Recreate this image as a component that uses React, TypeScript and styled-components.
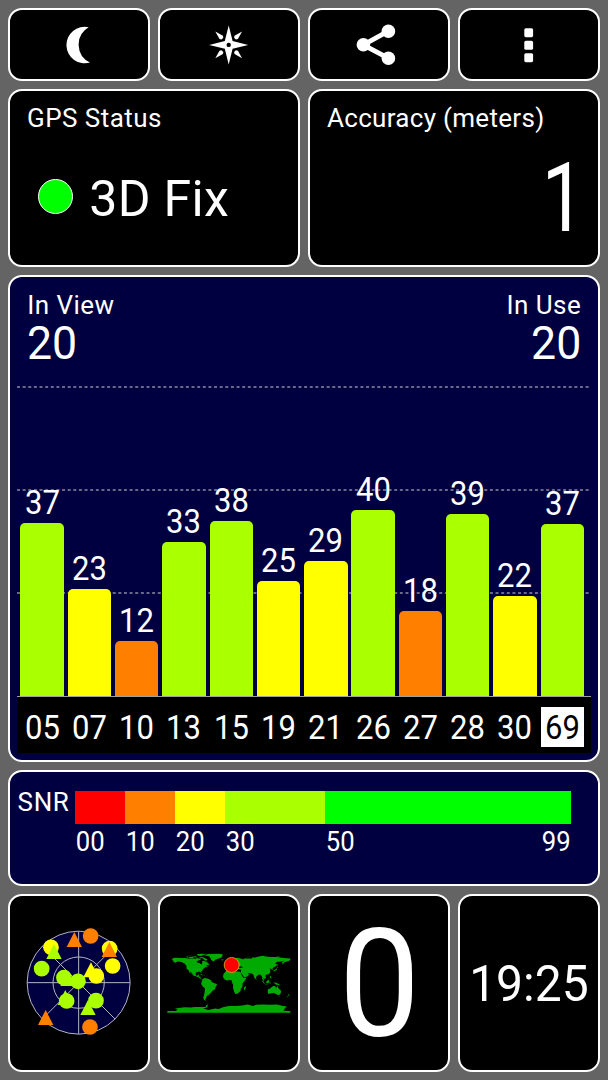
import React from "react";
import styled, { createGlobalStyle } from "styled-components";

const RED = "#ff0000";
const ORANGE = "#ff8000";
const YELLOW = "#ffff00";
const LIME = "#aaff00";
const GREEN = "#00ff00";
const NAVY = "#000040";

const GlobalStyle = createGlobalStyle`
  * { box-sizing: border-box; }
  body {
    margin: 0;
    background: #646464;
    color: #fff;
    font-family: Roboto, "Liberation Sans", sans-serif;
  }
`;

const Screen = styled.main`
  display: grid;
  grid-template-columns: repeat(4, 142px);
  grid-template-rows: 73px 178px 487px 116px 178px;
  gap: 8px;
  width: 608px;
  height: 1080px;
  padding: 8px;
`;

const Card = styled.section<{ $span?: number; $fill?: string }>`
  grid-column: span ${(p) => p.$span ?? 1};
  display: flex;
  flex-direction: column;
  min-width: 0;
  border: 2px solid #fff;
  border-radius: 14px;
  background: ${(p) => p.$fill ?? "#000"};
`;

const CenterCard = styled(Card)<{ $drop?: number }>`
  align-items: center;
  justify-content: center;
  padding-top: ${(p) => p.$drop ?? 0}px;
`;

const IconButton = styled.button`
  display: flex;
  align-items: center;
  justify-content: center;
  padding: 0;
  border: 2px solid #fff;
  border-radius: 14px;
  background: #000;
  color: #fff;
`;

const Icon = styled.svg`
  width: 48px;
  height: 48px;
  fill: currentColor;
`;

const Text = styled.span<{ $size: number; $line: number; $spacing?: number }>`
  display: block;
  font-size: ${(p) => p.$size}px;
  line-height: ${(p) => p.$line}px;
  letter-spacing: ${(p) => p.$spacing ?? 0}px;
  white-space: nowrap;
`;

const Narrow = styled(Text)<{ $scale: number; $origin?: string }>`
  transform: scaleX(${(p) => p.$scale});
  transform-origin: ${(p) => p.$origin ?? "center"};
`;

const StatusCard = styled(Card)`
  padding: 12px 16px 0 17px;
`;

const FixRow = styled.div`
  display: flex;
  align-items: flex-start;
  gap: 16px;
  margin-top: 37px;
  padding-left: 11.3px;
`;

const FixDot = styled.span`
  width: 35px;
  height: 35px;
  margin-top: 9px;
  border: 1px solid #fff;
  border-radius: 50%;
  background: ${GREEN};
`;

const AccuracyValue = styled(Narrow)`
  align-self: flex-end;
  margin: 9px -3px 0 0;
`;

const ChartCard = styled(Card)`
  padding: 0 7.3px;
`;

const ChartHeader = styled.header`
  display: flex;
  justify-content: space-between;
  height: 103px;
  padding: 13px 9.5px 0 10px;
`;

const Count = styled.div<{ $end?: boolean }>`
  display: flex;
  flex-direction: column;
  align-items: ${(p) => (p.$end ? "flex-end" : "flex-start")};
`;

const CountValue = styled(Narrow)`
  margin-top: -2px;
`;

const Plot = styled.div`
  display: grid;
  height: 317px;
  border-bottom: 1px solid #a0a0a0;
`;

const GridLines = styled.svg`
  grid-area: 1 / 1;
  width: 573.4px;
  height: 316px;
`;

const Columns = styled.div`
  grid-area: 1 / 1;
  display: grid;
  grid-template-columns: repeat(12, 1fr);
  gap: 3.9px;
  padding: 0 6.8px 0 3.2px;
`;

const Column = styled.div`
  display: flex;
  flex-direction: column;
  align-items: center;
  justify-content: flex-end;
`;

const Bar = styled.div<{ $color: string }>`
  width: 100%;
  margin-top: 1px;
  border-radius: 5px 5px 0 0;
  background: ${(p) => p.$color};
`;

const IdBand = styled.div`
  display: grid;
  grid-template-columns: repeat(12, 1fr);
  align-items: start;
  gap: 3.9px;
  height: 56px;
  padding: 10px 6.8px 0 3.2px;
  background: #000;
`;

const SatId = styled.div<{ $active?: boolean }>`
  display: flex;
  justify-content: center;
  height: 40px;
  color: ${(p) => (p.$active ? "#000" : "#fff")};
  background: ${(p) => (p.$active ? "#fff" : "transparent")};
`;

const SnrCard = styled(Card)`
  flex-direction: row;
  align-items: flex-start;
  padding-left: 7.6px;
`;

const SnrLabel = styled(Text)`
  width: 57.1px;
  margin-top: 14.5px;
`;

const Scale = styled.div`
  display: flex;
  margin-top: 19px;
`;

const Segment = styled.div<{ $width: number }>`
  width: ${(p) => p.$width}px;
`;

const Swatch = styled.div<{ $color: string }>`
  height: 32.5px;
  background: ${(p) => p.$color};
`;

const Ticks = styled.div`
  display: flex;
  justify-content: space-between;
  margin-top: 3px;
`;

const RadarSvg = styled.svg`
  width: 105.3px;
  height: 105.3px;
  overflow: visible;
`;

const MapSvg = styled.svg`
  width: 126.7px;
  height: 63.3px;
`;

const satellites = [
  { id: "05", snr: 37, height: 173.5, color: LIME },
  { id: "07", snr: 23, height: 106.7, color: YELLOW },
  { id: "10", snr: 12, height: 55.3, color: ORANGE },
  { id: "13", snr: 33, height: 154.3, color: LIME },
  { id: "15", snr: 38, height: 175, color: LIME },
  { id: "19", snr: 25, height: 115, color: YELLOW },
  { id: "21", snr: 29, height: 134.7, color: YELLOW },
  { id: "26", snr: 40, height: 185.7, color: LIME },
  { id: "27", snr: 18, height: 85, color: ORANGE },
  { id: "28", snr: 39, height: 182, color: LIME },
  { id: "30", snr: 22, height: 100.3, color: YELLOW },
  { id: "69", snr: 37, height: 172.3, color: LIME, active: true },
];

const scale = [
  { width: 50, color: RED, ticks: ["00"] },
  { width: 50, color: ORANGE, ticks: ["10"] },
  { width: 50, color: YELLOW, ticks: ["20"] },
  { width: 100, color: LIME, ticks: ["30"] },
  { width: 246.5, color: GREEN, ticks: ["50", "99"] },
];

type Mark = { shape: "circle" | "triangle"; x: number; y: number; color: string };

// Circles are placed by centre, triangles by apex.
const marks: Mark[] = [
  { shape: "triangle", x: 193, y: 36, color: ORANGE },
  { shape: "circle", x: 242, y: 48, color: ORANGE },
  { shape: "circle", x: 123, y: 82, color: YELLOW },
  { shape: "triangle", x: 132, y: 72, color: LIME },
  { shape: "circle", x: 299, y: 86, color: YELLOW },
  { shape: "triangle", x: 298, y: 66, color: ORANGE },
  { shape: "circle", x: 308, y: 138, color: YELLOW },
  { shape: "circle", x: 95, y: 146, color: LIME },
  { shape: "circle", x: 162, y: 173, color: LIME },
  { shape: "triangle", x: 174, y: 153, color: LIME },
  { shape: "circle", x: 204, y: 184, color: LIME },
  { shape: "triangle", x: 243, y: 127, color: YELLOW },
  { shape: "circle", x: 259, y: 168, color: YELLOW },
  { shape: "triangle", x: 166, y: 210, color: LIME },
  { shape: "circle", x: 170, y: 243, color: LIME },
  { shape: "circle", x: 258, y: 242, color: LIME },
  { shape: "triangle", x: 234, y: 240, color: LIME },
  { shape: "triangle", x: 107, y: 270, color: ORANGE },
  { shape: "circle", x: 240, y: 321, color: ORANGE },
];

// Land outlines as longitude,latitude pairs.
const land = [
  // North and Central America
  "-168,66 -162,70 -156,71 -141,70 -128,70 -115,68 -108,68 -96,68 -94,72 -90,69 -82,69 -82,66 -87,64 -94,61 -94,58 -85,55 -82,52 -79,52 -78,58 -77,62 -70,61 -65,59 -60,54 -56,52 -60,50 -66,50 -64,46 -61,46 -66,43 -70,43 -71,41 -75,39 -76,35 -81,31 -80,26 -82,27 -84,30 -90,30 -97,27 -97,21 -94,18 -91,19 -90,21 -87,21 -88,16 -83,15 -83,10 -79,9 -77,8 -80,7 -85,10 -88,13 -95,16 -105,20 -106,23 -112,30 -114,31 -110,23 -115,28 -118,34 -124,39 -124,47 -130,54 -137,58 -146,60 -152,59 -155,57 -163,54 -157,58 -162,59 -166,62 -161,64",
  // Baffin and the Arctic islands
  "-90,73 -80,73 -72,71 -65,67 -62,66 -66,62 -72,64 -74,67 -80,70",
  "-117,73 -105,73 -101,69 -115,69",
  "-125,75 -122,71 -116,73",
  "-120,77 -98,76 -92,74 -110,75",
  "-95,81 -80,83 -62,82 -75,79 -80,76 -90,77",
  "-100,74 -94,74 -96,72 -102,72",
  // Greenland
  "-72,78 -60,82 -30,83 -18,81 -19,76 -22,71 -32,68 -40,65 -44,60 -51,64 -54,70 -58,75",
  // Iceland, Britain, Cuba, Hispaniola
  "-24,65 -20,66 -14,65 -19,63",
  "-6,58 -2,57 1,52 -5,50 -4,54",
  "-10,54 -6,54 -7,52",
  "-85,22 -80,23 -74,20 -78,20",
  "-74,20 -69,19 -72,18",
  // South America
  "-77,8 -72,12 -62,10 -52,5 -50,0 -44,-3 -35,-6 -35,-9 -39,-15 -40,-21 -48,-26 -54,-34 -58,-35 -57,-38 -62,-39 -65,-42 -66,-46 -69,-51 -66,-55 -72,-53 -75,-47 -73,-40 -71,-30 -70,-18 -76,-14 -81,-6 -80,-1",
  // Africa
  "-6,36 10,37 11,33 20,31 32,31 35,28 37,21 43,12 51,12 48,5 40,-4 40,-15 35,-20 35,-25 31,-29 26,-34 19,-35 15,-27 12,-17 13,-9 9,-1 9,4 4,6 -7,4 -13,8 -17,14 -16,23 -10,30",
  "44,-17 49,-12 50,-16 46,-25 44,-22",
  // Europe and Asia
  "-9,43 -1,44 -4,48 3,51 8,54 8,57 12,54 21,55 24,59 30,60 22,61 25,65 18,62 16,57 12,56 10,59 5,59 5,62 14,68 25,71 40,67 44,66 43,69 55,69 68,69 69,73 74,71 82,73 98,77 113,74 128,73 140,73 160,70 180,69 180,65 177,62 170,60 163,58 157,51 156,58 163,62 155,60 142,59 135,54 141,52 139,47 131,43 128,40 129,36 126,35 125,39 121,39 118,38 122,37 120,34 122,30 117,23 108,21 107,17 109,12 105,9 101,13 104,2 101,4 98,9 97,17 92,22 87,21 80,15 80,11 77,8 73,17 72,21 67,25 57,26 56,24 60,22 55,17 45,13 42,18 35,28 36,36 27,37 27,41 36,42 41,42 38,45 34,45 31,46 28,42 24,38 22,37 19,42 13,45 18,40 16,38 11,43 4,43 0,39 -2,37 -6,36 -9,37",
  "52,71 55,74 68,77 57,74",
  "142,76 150,75 140,74",
  // Japan, Sakhalin, Sri Lanka
  "141,45 145,43 141,42",
  "141,41 140,35 131,31 130,33 137,37",
  "142,54 144,49 142,46",
  "80,9 82,7 80,6",
  // Indonesia, Philippines, New Guinea
  "95,5 100,3 106,-5 102,-4",
  "105,-6 115,-8 108,-8",
  "109,1 117,7 118,3 116,-4 110,-3",
  "119,1 125,1 121,-1 123,-5 119,-4",
  "120,18 122,17 126,8 121,13",
  "131,-1 138,-2 147,-6 150,-10 143,-8 138,-8 134,-4",
  // Australia, Tasmania, New Zealand
  "114,-22 122,-18 126,-14 131,-12 136,-12 136,-15 140,-17 142,-11 146,-19 153,-26 152,-32 150,-37 144,-38 138,-35 132,-32 124,-33 116,-35 114,-30",
  "145,-41 148,-41 147,-43",
  "173,-35 178,-38 175,-41",
  "172,-41 174,-42 167,-46",
  // Antarctica
  "-180,-90 -180,-85 -155,-85 -150,-81 -158,-78 -146,-76 -130,-74 -110,-75 -100,-73 -80,-73 -68,-73 -67,-68 -58,-64 -63,-68 -62,-74 -75,-78 -60,-82 -40,-78 -30,-79 -15,-73 0,-70 20,-70 40,-69 55,-66 70,-70 80,-67 100,-66 120,-67 140,-66 160,-70 170,-72 164,-78 160,-84 180,-85 180,-90",
];

const MoonIcon = () => (
  <Icon viewBox="0 0 48 48">
    <path d="M33.7 6.2A18.3 18.3 0 1 0 35 41.6A20 20 0 0 1 33.7 6.2Z" />
  </Icon>
);

const CompassIcon = () => (
  <Icon viewBox="-23.7 -23.9 48 48">
    <path d="M0-19.5L3.9-3.9L19.5 0L3.9 3.9L0 19.5L-3.9 3.9L-19.5 0L-3.9-3.9Z" />
    {[0, 90, 180, 270].map((angle) => (
      <path key={angle} transform={`rotate(${angle})`} d="M13.4-13.4L9.2-5.8L7.2-5.4L5.4-7.2L5.8-9.2Z" />
    ))}
    <circle r="2.2" fill="#000" />
  </Icon>
);

const ShareIcon = () => (
  <Icon viewBox="0 0 48 48">
    <path d="M33.3 10.2L8.3 23.9L33.3 37.2" fill="none" stroke="currentColor" strokeWidth="4.8" />
    <circle cx="8.4" cy="23.8" r="6.8" />
    <circle cx="33.4" cy="10.3" r="6.8" />
    <circle cx="33.4" cy="37.2" r="6.8" />
  </Icon>
);

const MenuIcon = () => (
  <Icon viewBox="0 0 48 48">
    {[7.2, 19.8, 32.2].map((y) => (
      <rect key={y} x="19.3" y={y} width="8.8" height="9" rx="1.6" />
    ))}
  </Icon>
);

const Radar = () => (
  <RadarSvg viewBox="48 30 316 316">
    <circle cx="206" cy="188" r="154.5" fill={NAVY} />
    <g fill="none" stroke="#b4b4c4" strokeWidth="3">
      <circle cx="206" cy="188" r="154.5" />
      <circle cx="206" cy="188" r="77" />
      <path d="M206 34V342M52 188H360M97 79L315 297M315 79L97 297" />
    </g>
    {marks.map((m, i) =>
      m.shape === "circle" ? (
        <circle key={i} cx={m.x} cy={m.y} r="23.5" fill={m.color} />
      ) : (
        <path key={i} d={`M${m.x} ${m.y}l23 45h-46z`} fill={m.color} />
      )
    )}
  </RadarSvg>
);

const WorldMap = () => (
  <MapSvg viewBox="32 49 380 190">
    <g transform="translate(220.5 142) scale(1.025 -1.025)" fill="#00aa00">
      {land.map((points, i) => (
        <polygon key={i} points={points} />
      ))}
    </g>
    <circle cx="229" cy="91" r="22.5" fill={RED} stroke="#d8b020" strokeWidth="2.5" />
  </MapSvg>
);

export default function App() {
  return (
    <>
      <GlobalStyle />
      <Screen>
        <IconButton aria-label="Night mode"><MoonIcon /></IconButton>
        <IconButton aria-label="Compass"><CompassIcon /></IconButton>
        <IconButton aria-label="Share"><ShareIcon /></IconButton>
        <IconButton aria-label="Menu"><MenuIcon /></IconButton>

        <StatusCard $span={2}>
          <Text $size={26} $line={30} $spacing={0.45}>GPS Status</Text>
          <FixRow>
            <FixDot />
            <Text $size={50} $line={58} $spacing={0.3}>3D Fix</Text>
          </FixRow>
        </StatusCard>
        <StatusCard $span={2}>
          <Text $size={26} $line={30} $spacing={0.3}>Accuracy (meters)</Text>
          <AccuracyValue $size={96} $line={112} $scale={0.8} $origin="right">1</AccuracyValue>
        </StatusCard>

        <ChartCard $span={4} $fill={NAVY}>
          <ChartHeader>
            <Count>
              <Text $size={26} $line={30} $spacing={0.45}>In View</Text>
              <CountValue $size={46.5} $line={50} $scale={0.96} $origin="left">20</CountValue>
            </Count>
            <Count $end>
              <Text $size={26} $line={30} $spacing={0.45}>In Use</Text>
              <CountValue $size={46.5} $line={50} $scale={0.96} $origin="right">20</CountValue>
            </Count>
          </ChartHeader>
          <Plot>
            <GridLines viewBox="0 0 573.4 316">
              {[7, 110, 213].map((y) => (
                <path key={y} d={`M0 ${y}H573.4`} stroke="#8a8aa2" strokeWidth="1.4" strokeDasharray="3 2.63" />
              ))}
            </GridLines>
            <Columns>
              {satellites.map((s) => (
                <Column key={s.id}>
                  <Narrow $size={33} $line={38} $scale={0.94}>{s.snr}</Narrow>
                  <Bar $color={s.color} style={{ height: s.height }} />
                </Column>
              ))}
            </Columns>
          </Plot>
          <IdBand>
            {satellites.map((s) => (
              <SatId key={s.id} $active={s.active}>
                <Narrow $size={33} $line={42} $scale={0.94}>{s.id}</Narrow>
              </SatId>
            ))}
          </IdBand>
        </ChartCard>

        <SnrCard $span={4} $fill={NAVY}>
          <SnrLabel $size={26} $line={30} $spacing={0.6}>SNR</SnrLabel>
          <Scale>
            {scale.map((s) => (
              <Segment key={s.color} $width={s.width}>
                <Swatch $color={s.color} />
                <Ticks>
                  {s.ticks.map((t) => (
                    <Narrow key={t} $size={27} $line={30} $scale={0.95}>{t}</Narrow>
                  ))}
                </Ticks>
              </Segment>
            ))}
          </Scale>
        </SnrCard>

        <CenterCard><Radar /></CenterCard>
        <CenterCard><WorldMap /></CenterCard>
        <CenterCard $drop={4}><Narrow $size={151} $line={150} $scale={0.96}>0</Narrow></CenterCard>
        <CenterCard $drop={2}><Narrow $size={50.5} $line={58} $scale={0.95}>19:25</Narrow></CenterCard>
      </Screen>
    </>
  );
}
